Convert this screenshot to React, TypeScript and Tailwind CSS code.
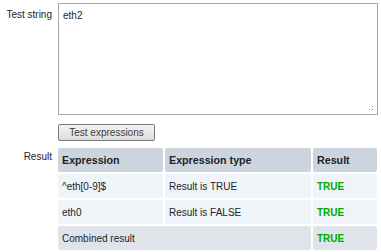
import React from "react";

export default function App() {
  const font = { fontFamily: '"Liberation Sans", Arial, sans-serif' };
  const cell = "rounded-[2px] px-[4px] flex items-center h-[24px]";
  const head = `${cell} bg-[#ccd5de] font-bold text-[10.7px]`;
  return (
    <div className="w-[381px] h-[252px] bg-white text-[10px] text-[#1f2326]" style={font}>
      <div className="grid grid-cols-[52px_320px] gap-x-[6px] pt-[3px]">
        <div className="text-right pt-[6px] leading-[12px]">Test string</div>
        <div className="relative h-[112px] border border-[#a8a79b] bg-white">
          <div className="pl-[4px] pt-[6px] leading-[12px]">eth2</div>
          <svg className="absolute right-[3px] bottom-[3px]" width="6" height="6" viewBox="0 0 6 6">
            <rect x="4" y="1" width="1" height="1" fill="#777" />
            <rect x="4" y="4" width="1" height="1" fill="#777" />
            <rect x="1" y="4" width="1" height="1" fill="#777" />
          </svg>
        </div>

        <div />
        <div className="pt-[9px]">
          <button className="h-[17px] w-[97px] border border-[#7a7a7a] rounded-[2px] bg-gradient-to-b from-[#f4f4f4] to-[#dcdcdc] text-[10px] text-[#3a3a3a] leading-[15px]">
            Test expressions
          </button>
        </div>

        <div className="text-right pt-[10px] leading-[12px]">Result</div>
        <div className="pt-[7px]">
          <div className="grid grid-cols-[105px_146px_64px] gap-[2px]">
            <div className={head}>Expression</div>
            <div className={head}>Expression type</div>
            <div className={head}>Result</div>

            <div className={`${cell} bg-[#eff4f8]`}>^eth[0-9]$</div>
            <div className={`${cell} bg-[#eff4f8]`}>Result is TRUE</div>
            <div className={`${cell} bg-[#eff4f8] font-bold text-[#00aa00]`}>TRUE</div>

            <div className={`${cell} bg-[#eff4f8]`}>eth0</div>
            <div className={`${cell} bg-[#eff4f8]`}>Result is FALSE</div>
            <div className={`${cell} bg-[#eff4f8] font-bold text-[#00aa00]`}>TRUE</div>

            <div className={`${cell} bg-[#dfe4eb] col-span-2`}>Combined result</div>
            <div className={`${cell} bg-[#dfe4eb] font-bold text-[#00aa00]`}>TRUE</div>
          </div>
        </div>
      </div>
    </div>
  );
}
